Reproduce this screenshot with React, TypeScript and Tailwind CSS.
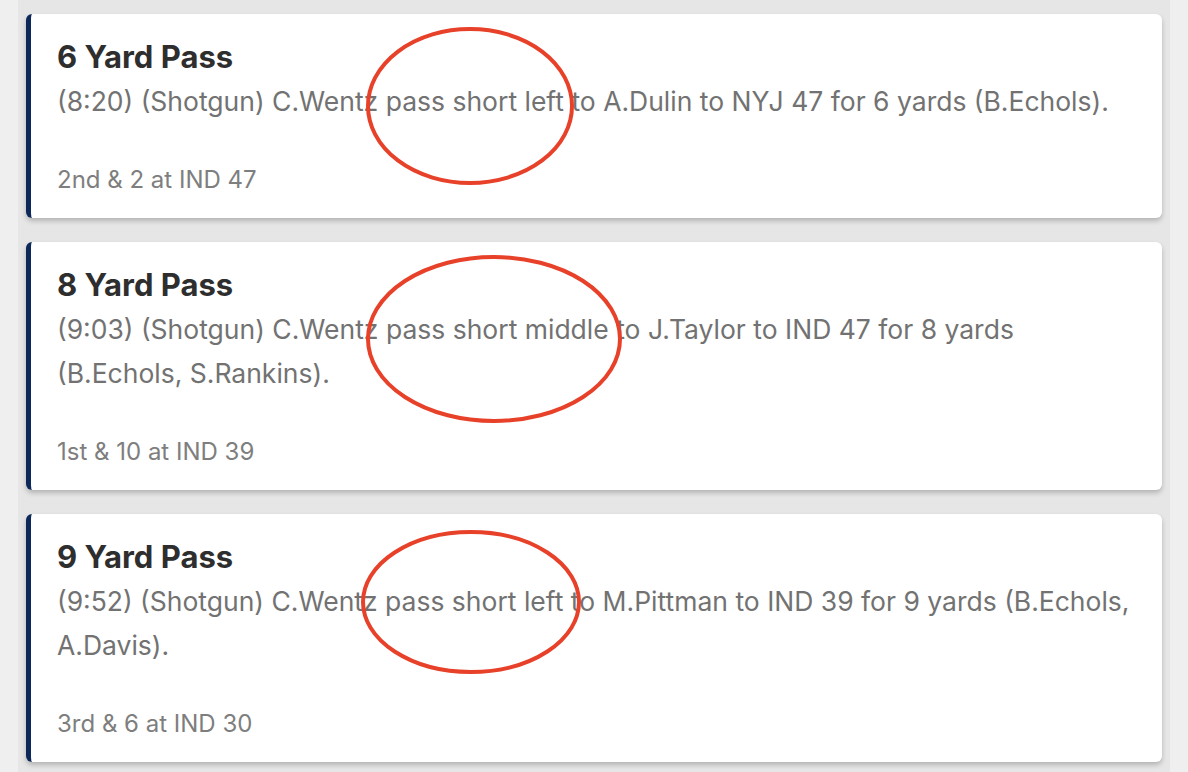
import React from 'react'

const plays = [
  {
    title: '6 Yard Pass',
    desc: '(8:20) (Shotgun) C.Wentz pass short left to A.Dulin to NYJ 47 for 6 yards (B.Echols).',
    down: '2nd & 2 at IND 47',
  },
  {
    title: '8 Yard Pass',
    desc: '(9:03) (Shotgun) C.Wentz pass short middle to J.Taylor to IND 47 for 8 yards (B.Echols, S.Rankins).',
    down: '1st & 10 at IND 39',
  },
  {
    title: '9 Yard Pass',
    desc: '(9:52) (Shotgun) C.Wentz pass short left to M.Pittman to IND 39 for 9 yards (B.Echols, A.Davis).',
    down: '3rd & 6 at IND 30',
  },
]

// anotaciones rojas dibujadas encima de la captura
const marks = [
  { cx: 470, cy: 106, rx: 102, ry: 77 },
  { cx: 494, cy: 339, rx: 126, ry: 82 },
  { cx: 471, cy: 602, rx: 108, ry: 70 },
]

function PlayCard({ title, desc, down }: { title: string; desc: string; down: string }) {
  return (
    <div className="bg-white rounded-[6px] border-l-[5px] border-[#0b2858] shadow-[0_3px_5px_rgba(0,0,0,0.22)] pl-[26px] pr-6 pt-[21px] pb-[23px]">
      <h2 className="text-[31px] leading-[44px] font-bold text-[#2e2e2e]">{title}</h2>
      <p className="text-[26.5px] leading-[44px] text-[#727272]">{desc}</p>
      <div className="mt-[42px] text-[24px] leading-[30px] text-[#7e7e7e]">{down}</div>
    </div>
  )
}

export default function App() {
  return (
    <div
      className="relative h-[772px] overflow-hidden bg-[#efefef] px-[18px]"
      style={{ fontFamily: 'Inter, "Noto Sans", sans-serif' }}
    >
      <div className="h-full bg-[#e6e6e6] px-2 pt-[14px] flex flex-col gap-6">
        {plays.map(p => (
          <PlayCard key={p.title} {...p} />
        ))}
      </div>

      <svg className="absolute inset-0 pointer-events-none" width="1188" height="772">
        {marks.map((m, i) => (
          <ellipse key={i} cx={m.cx} cy={m.cy} rx={m.rx} ry={m.ry} fill="none" stroke="#e8412a" strokeWidth="4" />
        ))}
      </svg>
    </div>
  )
}
